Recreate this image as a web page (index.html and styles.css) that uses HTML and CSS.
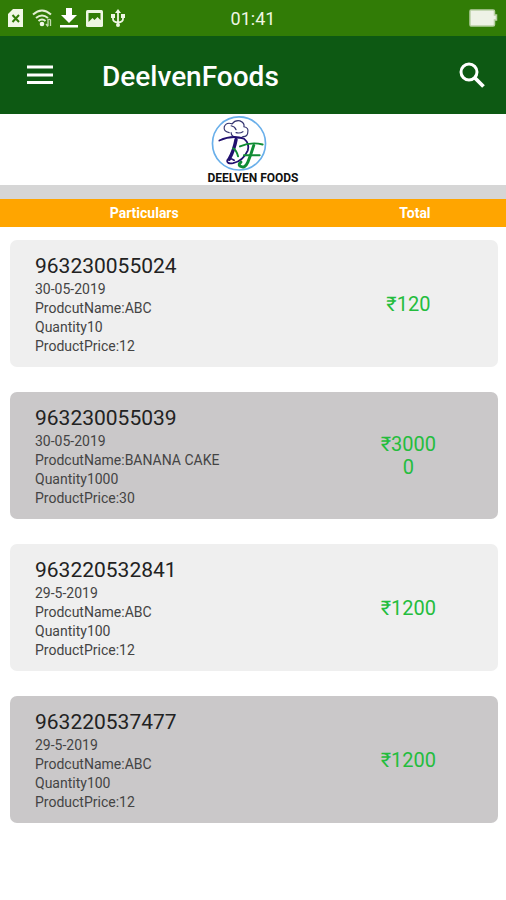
FILE: index.html
```html
<!DOCTYPE html>
<html lang="en">
<head>
<meta charset="utf-8">
<meta name="viewport" content="width=device-width, initial-scale=1">
<title>DeelvenFoods</title>
<link rel="stylesheet" href="styles.css">
</head>
<body>
<div class="status">
  <div class="status-icons">
    <svg width="16" height="18" viewBox="0 0 16 18" aria-hidden="true"><path fill="#f1f8e6" d="M5 0h10v18H0V5z"/><path d="M4.500 6l6.500 7M11 6l-6.500 7" stroke="#317c06" stroke-width="2"/></svg>
    <svg width="20" height="18" viewBox="0 0 20 18" aria-hidden="true"><g fill="none" stroke="#e2efd3" stroke-width="2"><path d="M1 5.500Q10-2.500 19 5.500M4 9q6-5 12 0M6.500 12q3.500-3 7 0"/></g><circle cx="10" cy="15" r="2.300" fill="#f1f8e6"/><path d="M16 10v7m-2-2l2 2.500M18.500 17v-6l-2-1" fill="none" stroke="#c5ddb0" stroke-width="1.300"/></svg>
    <svg width="18" height="20" viewBox="0 0 18 20" aria-hidden="true"><path fill="#fff" d="M6 0h6v7h5l-8 8-8-8h5zM0 17h18v2.500H0z"/></svg>
    <svg width="17" height="17" viewBox="0 0 17 17" aria-hidden="true"><rect width="17" height="17" rx="1.500" fill="#eef6e3"/><path fill="#317c06" d="M2.500 3h12v7l-3-3-3 3-2-2-4 4z"/></svg>
    <svg width="14" height="18" viewBox="0 0 14 18" aria-hidden="true"><path d="M7 2v15M2 6v4q0 3 5 3.500Q12 13 12 10V6" fill="none" stroke="#eef6e3" stroke-width="1.800"/><path fill="#eef6e3" d="M7 0l3 4H4zM0 5h4v4H0zM10 5h4v4h-4z"/><circle cx="7" cy="16" r="2" fill="#eef6e3"/></svg>
  </div>
  <time class="clock">01:41</time>
  <svg class="battery" width="30" height="18" viewBox="0 0 30 18" aria-hidden="true"><path fill="#eef2e6" stroke="#b9d0a5" stroke-width="1.500" d="M3 1h22q1.500 0 1.500 1.500V6h2v5h-2v4.500Q26.500 17 25 17H3q-1 0-1-1.500v-13Q2 1 3 1z"/></svg>
</div>
<header class="bar">
  <button class="icon-button" type="button" aria-label="Menu"><svg width="28" height="20" viewBox="0 0 28 20"><path d="M1 2h26M1 10h26M1 17.500h26" stroke="#fff" stroke-width="3.200"/></svg></button>
  <h1 class="title">DeelvenFoods</h1>
  <button class="icon-button" type="button" aria-label="Search"><svg width="28" height="28" viewBox="0 0 28 28"><circle cx="11" cy="11" r="8" fill="none" stroke="#fff" stroke-width="3"/><path d="M16.500 16.500l9 9" stroke="#fff" stroke-width="3.800"/></svg></button>
</header>
<main>
  <div class="brand">
    <svg width="58" height="58" viewBox="0 0 58 58" aria-hidden="true">
      <circle cx="29" cy="30" r="27" fill="#fff" stroke="#69afea" stroke-width="1.700"/>
      <g fill="none" stroke-linecap="round" stroke-linejoin="round">
        <path stroke="#33336f" stroke-width="1.200" d="M19 19q-6-1-5-6 2-5 8-3 3-4 8-3 5 2 4 6 5 1 4 5 0 5-5 5-2 2-6 1-6-1-6-5M21 12q4 1 5 4M26 19q4 1 7-1"/>
        <path stroke="#21106f" stroke-width="1.800" d="M9 27q13-6 25-2 6 5 4 12-5 11-15 13-7 1-6-3 2-3 7 0"/>
        <path stroke="#21106f" stroke-width="3.500" d="M26 26q-2 11-7 20"/>
        <path stroke="#108c35" stroke-width="2" d="M23 35q3 1 5 8M30 33q11-5 23-2M34 42h16"/>
        <path stroke="#108c35" stroke-width="3" d="M44 32q-3 10-6 17-3 7-8 4-2-2 1-4"/>
      </g>
    </svg>
    <span class="brand-name">DEELVEN FOODS</span>
  </div>
  <table class="orders">
    <thead>
      <tr class="heading"><th scope="col">Particulars</th><th scope="col">Total</th></tr>
    </thead>
    <tbody class="cards">
      <tr class="card">
        <td><h2 class="number">963230055024</h2><p>30-05-2019</p><p>ProdcutName:ABC</p><p>Quantity10</p><p>ProductPrice:12</p></td>
        <td class="total"><span class="amount">₹120</span></td>
      </tr>
      <tr class="card shaded">
        <td><h2 class="number">963230055039</h2><p>30-05-2019</p><p>ProdcutName:BANANA CAKE</p><p>Quantity1000</p><p>ProductPrice:30</p></td>
        <td class="total"><span class="amount">₹30000</span></td>
      </tr>
      <tr class="card">
        <td><h2 class="number">963220532841</h2><p>29-5-2019</p><p>ProdcutName:ABC</p><p>Quantity100</p><p>ProductPrice:12</p></td>
        <td class="total"><span class="amount">₹1200</span></td>
      </tr>
      <tr class="card shaded">
        <td><h2 class="number">963220537477</h2><p>29-5-2019</p><p>ProdcutName:ABC</p><p>Quantity100</p><p>ProductPrice:12</p></td>
        <td class="total"><span class="amount">₹1200</span></td>
      </tr>
    </tbody>
  </table>
</main>
</body>
</html>
```
FILE: styles.css
```css
* { box-sizing: border-box; }

body {
  margin: 0;
  background: #fff;
  color: #444;
  font-family: Roboto, "Noto Sans", sans-serif;
  font-size: 14px;
}

h1, h2, p { margin: 0; font-weight: 400; }

.status {
  display: grid;
  grid-template-columns: 1fr auto 1fr;
  align-items: center;
  height: 36px;
  padding: 0 8px;
  background: #317c06;
}

.status-icons { display: flex; align-items: center; gap: 8px; }

.clock { color: #eef6e3; font-size: 18px; }

.battery { justify-self: end; }

.bar {
  display: flex;
  align-items: center;
  height: 78px;
  padding: 0 16px;
  background: #0d5913;
}

.icon-button {
  display: grid;
  place-items: center;
  width: 48px;
  height: 48px;
  margin: 0;
  padding: 0;
  border: 0;
  background: none;
}

.bar .icon-button:last-child { width: 36px; }

.title {
  flex: 1;
  padding: 2px 38px 0;
  color: #fff;
  font-size: 28px;
  font-weight: 500;
}

.brand {
  display: flex;
  flex-direction: column;
  align-items: center;
  height: 85px;
  border-bottom: 14px solid #d6d6d6;
}

.brand svg { margin-right: 28px; }

.brand-name {
  color: #111;
  font-size: 12px;
  font-weight: 700;
  line-height: 14px;
}

.orders, .cards { display: block; }

.orders thead { display: block; }

.heading {
  display: grid;
  grid-template-columns: 57% 36%;
  justify-content: space-between;
  padding: 1px 0;
  background: #ffa500;
  color: #fff;
  line-height: 26px;
}

.heading th { padding: 0; font-weight: 700; }

.cards {
  display: grid;
  gap: 25px;
  padding: 13px 8px 24px 10px;
}

.card {
  display: grid;
  grid-template-columns: 1fr 37%;
  padding: 12px 0 11px 25px;
  border-radius: 7px;
  background: #efefef;
}

.shaded { background: #cac8c9; }

.card td { padding: 0; font-weight: 300; line-height: 19px; }

.number {
  color: #222;
  font-size: 21px;
  line-height: 28px;
}

.card .total {
  display: grid;
  place-items: center;
  padding-right: 8px;
  color: #24bd3d;
  font-size: 20px;
  font-weight: 400;
  line-height: 23px;
  text-align: center;
}

.amount { max-width: 60px; overflow-wrap: anywhere; }
```
